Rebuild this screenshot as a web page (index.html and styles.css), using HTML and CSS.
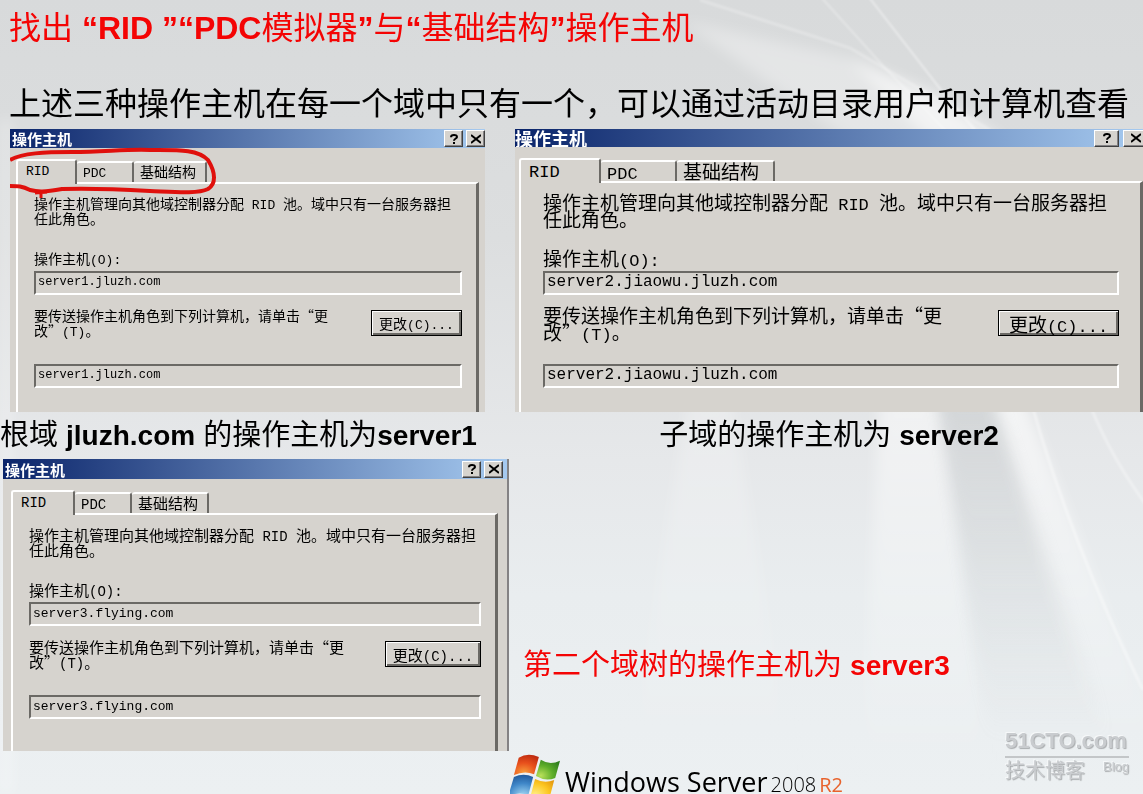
FILE: index.html
```html
<!DOCTYPE html>
<html lang="zh-CN">
<head>
    <meta charset="UTF-8">
    <meta name="viewport" content="width=device-width, initial-scale=1.0">
    <title>操作主机</title>
    <link rel="stylesheet" href="styles.css">
</head>
<body>
    <div class="slide">
        <!-- Background light rays -->
        <svg class="rays" viewBox="0 0 1143 794" preserveAspectRatio="none" aria-hidden="true">
            <defs>
                <filter id="soft" x="-20%" y="-20%" width="140%" height="140%"><feGaussianBlur stdDeviation="7"/></filter>
                <filter id="fine" x="-20%" y="-20%" width="140%" height="140%"><feGaussianBlur stdDeviation="1"/></filter>
                <linearGradient id="fade" x1="0" y1="0" x2="0" y2="1"><stop offset="0" stop-color="#fff"/><stop offset="1" stop-color="#fff" stop-opacity="0"/></linearGradient>
                <linearGradient id="shade" x1="0" y1="0" x2="0" y2="1"><stop offset="0" stop-color="#c2c6c8"/><stop offset="1" stop-color="#c2c6c8" stop-opacity="0"/></linearGradient>
            </defs>
            <g filter="url(#soft)" fill="#fff">
                <path d="M680 20 L860 60 L1010 140 L850 140 Z" opacity=".3"/>
                <path d="M850 60 L930 90 L1000 140 L930 140 Z" opacity=".5"/>
                <path d="M0 120 H12 V794 H0 Z" opacity=".3"/>
            </g>
            <g filter="url(#soft)" fill="url(#fade)">
                <path d="M985 390 L1020 390 L1160 740 L1100 760 Z" opacity=".6"/>
                <path d="M880 390 L935 390 L990 780 L860 780 Z" opacity=".5"/>
                <path d="M690 390 L730 390 L800 794 L620 794 Z" opacity=".25"/>
            </g>
            <path d="M938 390 L990 390 L1110 740 L990 740 Z" fill="url(#shade)" opacity=".5" filter="url(#soft)"/>
            <g filter="url(#fine)" stroke="#fff" fill="none">
                <path d="M868 -4 L945 95 L975 130" stroke-width="2" opacity=".45"/>
                <path d="M820 -4 L885 68 L945 130" stroke-width="2" opacity=".3"/>
                <path d="M700 0 L850 48 L925 92 L990 130" stroke-width="3" opacity=".25"/>
                <path d="M1032 405 Q1070 540 1143 690" stroke-width="3" opacity=".4"/>
                <path d="M1090 405 Q1112 460 1150 510" stroke-width="3" opacity=".35"/>
            </g>
        </svg>

        <h1 class="title">找出 <b>“RID ”“PDC</b>模拟器<b>”</b>与<b>“</b>基础结构<b>”</b>操作主机</h1>
        <h2 class="subtitle">上述三种操作主机在每一个域中只有一个，可以通过活动目录用户和计算机查看</h2>

        <div class="top-row">
            <!-- server1 -->
            <section class="dialog">
                <div class="title-bar">
                    <span class="title-text">操作主机</span>
                    <button class="bar-btn" type="button" aria-label="帮助"><svg viewBox="0 0 10 10"><path d="M2 3.2 C2 .3 8 .3 8 3 C8 4.5 5 4.6 5 6.8 M5 8 V10"/></svg></button>
                    <button class="bar-btn" type="button" aria-label="关闭"><svg viewBox="0 0 10 10"><path d="M0 1 L10 9 M10 1 L0 9"/></svg></button>
                </div>
                <div class="tabs">
                    <button class="tab active" type="button"><span class="latin">RID</span></button>
                    <button class="tab" type="button"><span class="latin">PDC</span></button>
                    <button class="tab last" type="button">基础结构</button>
                </div>
                <div class="panel">
                    <p class="intro">操作主机管理向其他域控制器分配<span class="latin"> RID </span>池。域中只有一台服务器担<br>任此角色。</p>
                    <label class="label" for="master1">操作主机<span class="latin">(O):</span></label>
                    <input class="field" id="master1" type="text" value="server1.jluzh.com" readonly>
                    <div class="transfer">
                        <label for="target1">要传送操作主机角色到下列计算机，请单击“更<br>改”<span class="latin">(T)</span>。</label>
                        <button class="change-btn" type="button">更改<span class="latin">(C)...</span></button>
                    </div>
                    <input class="field" id="target1" type="text" value="server1.jluzh.com" readonly>
                </div>
                <svg class="marker" viewBox="0 0 210 56" aria-hidden="true">
                    <path d="M0 16 C12 9 35 8 62 8 C95 8 115 5 140 6 C168 6 188 5 198 16 C206 29 206 40 198 45 C188 50 165 48 140 47 C105 45 80 44 52 45 C34 48 28 48 20 46 C12 42 8 42 0 42"/>
                    <path class="tick" d="M31 46 V54 M25 49 L37 48"/>
                </svg>
            </section>

            <!-- server2 -->
            <section class="dialog dialog-wide">
                <div class="title-bar">
                    <span class="title-text">操作主机</span>
                    <button class="bar-btn" type="button" aria-label="帮助"><svg viewBox="0 0 10 10"><path d="M2 3.2 C2 .3 8 .3 8 3 C8 4.5 5 4.6 5 6.8 M5 8 V10"/></svg></button>
                    <button class="bar-btn" type="button" aria-label="关闭"><svg viewBox="0 0 10 10"><path d="M0 1 L10 9 M10 1 L0 9"/></svg></button>
                </div>
                <div class="tabs">
                    <button class="tab active" type="button"><span class="latin">RID</span></button>
                    <button class="tab" type="button"><span class="latin">PDC</span></button>
                    <button class="tab last" type="button">基础结构</button>
                </div>
                <div class="panel">
                    <p class="intro">操作主机管理向其他域控制器分配<span class="latin"> RID </span>池。域中只有一台服务器担<br>任此角色。</p>
                    <label class="label" for="master2">操作主机<span class="latin">(O):</span></label>
                    <input class="field" id="master2" type="text" value="server2.jiaowu.jluzh.com" readonly>
                    <div class="transfer">
                        <label for="target2">要传送操作主机角色到下列计算机，请单击“更<br>改”<span class="latin">(T)</span>。</label>
                        <button class="change-btn" type="button">更改<span class="latin">(C)...</span></button>
                    </div>
                    <input class="field" id="target2" type="text" value="server2.jiaowu.jluzh.com" readonly>
                </div>
            </section>
        </div>

        <div class="captions">
            <p class="caption">根域 <b>jluzh.com</b> 的操作主机为<b>server1</b></p>
            <p class="caption center">子域的操作主机为 <b>server2</b></p>
        </div>

        <div class="bottom-row">
            <!-- server3 -->
            <section class="dialog dialog-tree">
                <div class="title-bar">
                    <span class="title-text">操作主机</span>
                    <button class="bar-btn" type="button" aria-label="帮助"><svg viewBox="0 0 10 10"><path d="M2 3.2 C2 .3 8 .3 8 3 C8 4.5 5 4.6 5 6.8 M5 8 V10"/></svg></button>
                    <button class="bar-btn" type="button" aria-label="关闭"><svg viewBox="0 0 10 10"><path d="M0 1 L10 9 M10 1 L0 9"/></svg></button>
                </div>
                <div class="tabs">
                    <button class="tab active" type="button"><span class="latin">RID</span></button>
                    <button class="tab" type="button"><span class="latin">PDC</span></button>
                    <button class="tab last" type="button">基础结构</button>
                </div>
                <div class="panel">
                    <p class="intro">操作主机管理向其他域控制器分配<span class="latin"> RID </span>池。域中只有一台服务器担<br>任此角色。</p>
                    <label class="label" for="master3">操作主机<span class="latin">(O):</span></label>
                    <input class="field" id="master3" type="text" value="server3.flying.com" readonly>
                    <div class="transfer">
                        <label for="target3">要传送操作主机角色到下列计算机，请单击“更<br>改”<span class="latin">(T)</span>。</label>
                        <button class="change-btn" type="button">更改<span class="latin">(C)...</span></button>
                    </div>
                    <input class="field" id="target3" type="text" value="server3.flying.com" readonly>
                </div>
            </section>
            <p class="caption red">第二个域树的操作主机为 <b>server3</b></p>
        </div>

        <footer class="footer">
            <svg class="flag" viewBox="0 0 54 50" aria-hidden="true">
                <defs>
                    <radialGradient id="r" cx=".4" cy=".9" r="1"><stop offset="0" stop-color="#f9a13c"/><stop offset=".5" stop-color="#e8501c"/><stop offset="1" stop-color="#b8260e"/></radialGradient>
                    <radialGradient id="g" cx=".2" cy=".8" r="1"><stop offset="0" stop-color="#b9e05a"/><stop offset=".5" stop-color="#5fae2a"/><stop offset="1" stop-color="#2b7a1c"/></radialGradient>
                    <radialGradient id="b" cx=".6" cy="1" r="1"><stop offset="0" stop-color="#a9dcf6"/><stop offset=".6" stop-color="#3f87c8"/><stop offset="1" stop-color="#215a9c"/></radialGradient>
                    <radialGradient id="y" cx=".2" cy=".8" r="1"><stop offset="0" stop-color="#fff08a"/><stop offset=".6" stop-color="#fcc621"/><stop offset="1" stop-color="#e59a10"/></radialGradient>
                </defs>
                <path d="M9 4 Q18 -2 30 3 L25 21 Q15 17 4 22 Z" fill="url(#r)"/>
                <path d="M32 6 Q41 12 52 7 L47 25 Q37 29 27 23 Z" fill="url(#g)"/>
                <path d="M4 24 Q14 19 24 24 L19 43 Q9 39 -2 44 Z" fill="url(#b)"/>
                <path d="M26 26 Q36 31 46 27 L41 46 Q31 50 21 45 Z" fill="url(#y)"/>
            </svg>
            <div class="product">
                <span class="brand">Windows Server</span>
                <span class="year">2008</span>
                <span class="release">R2</span>
            </div>
        </footer>

        <div class="watermark">
            <span class="site">51CTO.com</span>
            <span class="blog"><span>技术博客</span><small>Blog</small></span>
        </div>
    </div>
</body>
</html>
```
FILE: styles.css
```css
* {
    box-sizing: border-box;
}
body {
    margin: 0;
    font-family: "Liberation Sans", "Noto Sans CJK SC", sans-serif;
    color: #000;
}
.slide {
    position: relative;
    display: flex;
    flex-direction: column;
    min-height: 100vh;
    overflow: hidden;
    background: linear-gradient(#d8dadb 0%, #dcdedf 30%, #e6e8ea 58%, #e9edef 75%, #ecf0f2 100%);
}
.rays {
    position: absolute;
    top: 0;
    left: 0;
    width: 100%;
    height: 100%;
}
.title, .subtitle, .top-row, .captions, .bottom-row, .footer {
    position: relative;
}
.title, .subtitle {
    margin: 0;
    padding-left: 9px;
    font-size: 32px;
    font-weight: normal;
    white-space: nowrap;
}
.title {
    color: #f40404;
    line-height: 56px;
}
.subtitle {
    margin-top: 24px;
    line-height: 49px;
}
.top-row {
    display: grid;
    grid-template-columns: 475fr 628fr;
    gap: 30px;
    padding-left: 10px;
}
.captions {
    display: grid;
    grid-template-columns: 515fr 628fr;
}
.bottom-row {
    display: grid;
    grid-template-columns: 506fr 620fr;
    gap: 14px;
    padding-left: 3px;
}
.caption {
    margin: 0;
    font-size: 29px;
    line-height: 46px;
    white-space: nowrap;
}
.caption b {
    font-size: 28px;
}
.center {
    text-align: center;
}
.red {
    color: #f40404;
    align-self: end;
    padding-bottom: 62px;
}

/* Dialog windows */
.dialog {
    position: relative;
    display: flex;
    flex-direction: column;
    min-width: 0;
    background: #d6d3ce;
    font-family: "Noto Sans CJK SC", sans-serif;
    font-size: 14px;
    line-height: 15px;
}
.latin {
    font-family: "Liberation Mono", monospace;
    font-size: 13px;
    line-height: 0;
    white-space: pre;
}
.title-bar {
    display: flex;
    align-items: center;
    gap: 3px;
    height: 19px;
    overflow: hidden;
    background: linear-gradient(to right, #0a246a, #a6caf0);
}
.title-text {
    flex: 1;
    padding-left: 2px;
    color: #fff;
    font-weight: bold;
    font-size: 15px;
}
.bar-btn {
    display: flex;
    flex: none;
    align-items: center;
    justify-content: center;
    width: 19px;
    height: 17px;
    padding: 0;
    background: #d6d3ce;
    border: 1px solid;
    border-color: #fff #404040 #404040 #fff;
    box-shadow: inset -1px -1px #848284;
}
.bar-btn svg {
    width: 10px;
    height: 10px;
    fill: none;
    stroke: #000;
    stroke-width: 2;
}
.tabs {
    display: flex;
    align-items: flex-end;
    height: 34px;
    margin: 0 6px;
    padding-top: 9px;
}
.tab {
    width: 57px;
    height: 21px;
    padding: 0 0 2px 6px;
    border: 0;
    border-top: 2px solid #fff;
    border-right: 2px solid #6b6965;
    border-radius: 3px 3px 0 0;
    background: none;
    color: #000;
    font: inherit;
    text-align: left;
    white-space: nowrap;
}
.tab.active {
    position: relative;
    width: 61px;
    height: 25px;
    margin-bottom: -2px;
    padding: 0 0 6px 8px;
    border-left: 2px solid #fff;
    background: #d6d3ce;
}
.tab.last {
    width: 73px;
}
.panel {
    display: flex;
    flex: 1;
    flex-direction: column;
    margin: 0 6px;
    padding: 12px 14px 24px 16px;
    border: solid #fff;
    border-width: 2px 3px 0 2px;
    border-right-color: #6b6965;
}
.intro {
    margin: 0 0 25px;
    white-space: nowrap;
}
.label {
    margin-bottom: 5px;
}
.field {
    width: 100%;
    height: 24px;
    padding: 0 2px 2px;
    border: 2px solid;
    border-color: #6b6965 #fff #fff #6b6965;
    background: #d6d3ce;
    color: #000;
    font-family: "Liberation Mono", monospace;
    font-size: 12px;
}
.transfer {
    display: flex;
    justify-content: space-between;
    align-items: center;
    height: 55px;
    margin: 7px 0;
    padding-bottom: 13px;
    white-space: nowrap;
}
.change-btn {
    width: 91px;
    height: 26px;
    padding: 0;
    border: 1px solid #000;
    box-shadow: inset 1px 1px #fff, inset -2px -2px #6b6965;
    background: #d6d3ce;
    color: #000;
    font: inherit;
}

/* Wide dialog of the child domain */
.dialog-wide {
    overflow: hidden;
    font-size: 19px;
    line-height: 17px;
}
.dialog-wide .latin {
    font-size: 17px;
}
.dialog-wide .field {
    font-size: 16px;
}
.dialog-wide .title-bar {
    height: 18px;
    gap: 4px;
}
.dialog-wide .title-text {
    padding: 0;
    font-size: 18px;
}
.dialog-wide .bar-btn {
    width: 25px;
}
.dialog-wide .bar-btn:last-child {
    margin-right: -5px;
}
.dialog-wide .tabs {
    margin: 0 4px;
}
.dialog-wide .tab {
    width: 76px;
}
.dialog-wide .tab.active {
    width: 82px;
}
.dialog-wide .tab.last {
    width: 98px;
}
.dialog-wide .panel {
    margin: 0 0 0 4px;
    padding: 10px 21px 24px 22px;
}
.dialog-wide .intro {
    margin-bottom: 22px;
}
.dialog-wide .change-btn {
    width: 121px;
}

/* Dialog of the second tree */
.dialog-tree {
    border-right: 2px solid #848284;
    font-size: 15px;
}
.dialog-tree .latin {
    font-size: 14px;
}
.dialog-tree .field {
    font-size: 13px;
}
.dialog-tree .title-bar {
    height: 20px;
    padding-right: 4px;
}
.dialog-tree .tabs, .dialog-tree .panel {
    margin-left: 8px;
    margin-right: 9px;
}
.dialog-tree .tab.active {
    width: 64px;
}
.dialog-tree .tab.last {
    width: 77px;
}
.dialog-tree .panel {
    padding-bottom: 32px;
}
.dialog-tree .change-btn {
    width: 96px;
}

/* Hand-drawn ring over the tabs */
.marker {
    position: absolute;
    top: 15px;
    left: 0;
    width: 210px;
    height: 56px;
    fill: none;
    stroke: #e0100c;
    stroke-width: 4;
    pointer-events: none;
}
.marker .tick {
    stroke-width: 3;
}

.footer {
    display: flex;
    align-items: flex-start;
    height: 43px;
    padding-left: 510px;
    overflow: hidden;
    font-family: "Open Sans", sans-serif;
    line-height: 26px;
    white-space: nowrap;
}
.flag {
    width: 52px;
    height: 48px;
    margin-top: 3px;
    flex: none;
}
.product {
    display: flex;
    align-items: baseline;
    gap: 3px;
    padding: 18px 0 0 3px;
}
.brand {
    font-size: 27px;
}
.year {
    font-size: 20px;
    font-weight: 300;
}
.release {
    color: #e8622c;
    font-size: 20px;
}

.watermark {
    position: absolute;
    right: 14px;
    bottom: 10px;
    width: 124px;
    color: #c9cccf;
    text-shadow: 1px 1px 1px #a9acae, -1px -1px #f6f8f9;
}
.site {
    display: block;
    border-bottom: 2px solid #c3c6c8;
    font-size: 22px;
    font-weight: bold;
    line-height: 30px;
}
.blog {
    display: flex;
    justify-content: space-between;
    font-size: 20px;
    line-height: 26px;
}
.blog small {
    font-size: 13px;
    line-height: 18px;
}
```
